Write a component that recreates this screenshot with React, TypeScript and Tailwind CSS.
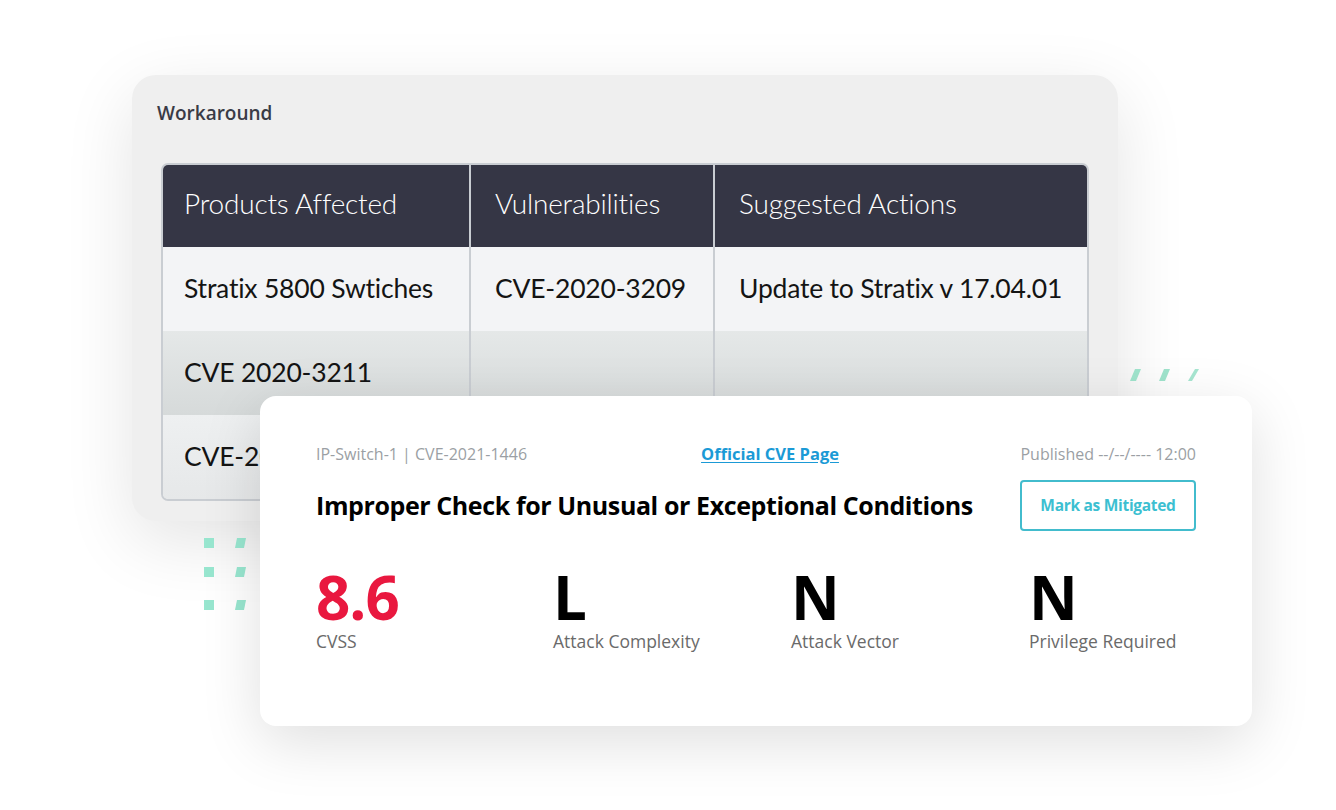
const lato = { fontFamily: "Lato, 'Noto Sans', sans-serif" };
const open = { fontFamily: "'Open Sans', 'Noto Sans', sans-serif" };

const rows = [
  ["Stratix 5800 Swtiches", "CVE-2020-3209", "Update to Stratix v 17.04.01"],
  ["CVE 2020-3211", "", ""],
  ["CVE-2020-3211", "", ""],
];

const stats = [
  { value: "8.6", label: "CVSS", red: true },
  { value: "L", label: "Attack Complexity" },
  { value: "N", label: "Attack Vector" },
  { value: "N", label: "Privilege Required" },
];

function Slashes() {
  return (
    <svg width="76" height="14" viewBox="0 0 76 14" className="absolute left-[1126px] top-[368px]">
      <polygon points="4,13 10,13 15,1 9,1" fill="#9fe3cc" />
      <polygon points="33,13 39,13 44,1 38,1" fill="#9fe3cc" />
      <polygon points="62,13 66,13 73,1 69,1" fill="#a7e6d1" />
    </svg>
  );
}

function Dots() {
  return (
    <svg width="46" height="76" viewBox="0 0 46 76" className="absolute left-[202px] top-[536px]">
      {[2, 31, 64].map((y) => (
        <g key={y}>
          <rect x="2" y={y} width="10" height="10" fill="#98e6cf" />
          <polygon points={`${33},${y + 10} ${42},${y + 10} ${44},${y} ${35},${y}`} fill="#98e6cf" />
        </g>
      ))}
    </svg>
  );
}

export default function App() {
  return (
    <div className="relative w-[1336px] h-[810px] bg-white overflow-hidden" style={lato}>
      {/* Workaround panel */}
      <div className="absolute left-[132px] top-[75px] w-[986px] h-[446px] rounded-[24px] bg-[#efefef] shadow-[0_20px_70px_rgba(0,0,0,0.11)] px-[29px] pt-[26px]">
        <div className="text-[19px] font-semibold text-[#3a3b46] ml-[-4px] leading-[24px]" style={open}>Workaround</div>
        <div className="mt-[38px] rounded-[7px] border-2 border-[#c9cdd2] overflow-hidden">
          <div className="grid grid-cols-[306px_244px_1fr] bg-[#353645] h-[82px] items-center text-white text-[28px] font-light tracking-[-0.2px]">
            <div className="pl-[21px] pb-[6px]">Products Affected</div>
            <div className="pl-[24px] pb-[6px] border-l-2 border-[#c9cdd2] h-full flex items-center">Vulnerabilities</div>
            <div className="pl-[24px] pb-[6px] border-l-2 border-[#c9cdd2] h-full flex items-center">Suggested Actions</div>
          </div>
          {rows.map((r, i) => (
            <div
              key={i}
              className={
                "grid grid-cols-[306px_244px_1fr] h-[84px] items-stretch text-[26.5px] text-[#141414] tracking-[-0.2px] " +
                (i === 0 ? "bg-[#f3f4f6]" : i === 1 ? "bg-gradient-to-b from-[#e5e8e8] to-[#d6dada]" : "bg-gradient-to-b from-[#eef0f1] to-[#e6e8e9]")
              }
            >
              <div className="pl-[21px] flex items-center">{r[0]}</div>
              <div className="pl-[24px] border-l-2 border-[#c9cdd2] flex items-center">{r[1]}</div>
              <div className="pl-[24px] border-l-2 border-[#c9cdd2] flex items-center">{r[2]}</div>
            </div>
          ))}
        </div>
      </div>

      <Slashes />
      <Dots />

      {/* CVE card */}
      <div
        className="absolute left-[260px] top-[396px] w-[992px] h-[330px] rounded-[16px] bg-white shadow-[0_16px_60px_rgba(0,0,0,0.13)] pl-[56px] pr-[56px] pt-[48px]"
        style={open}
      >
        <div className="grid grid-cols-[1fr_auto_1fr] items-center text-[16px] text-[#9b9fa4] leading-[20px]">
          <span>IP-Switch-1 | CVE-2021-1446</span>
          <a className="font-bold text-[#1b9ad6] text-[16.5px] underline underline-offset-2 ml-[28px]">Official CVE Page</a>
          <span className="text-right">Published --/--/---- 12:00</span>
        </div>
        <div className="flex items-center justify-between mt-[16px]">
          <h1 className="text-[25px] font-bold text-black tracking-[-0.4px]">Improper Check for Unusual or Exceptional Conditions</h1>
          <button className="w-[176px] h-[51px] rounded-[4px] border-2 border-[#42bccd] text-[#3cbfd1] text-[15.5px] font-bold tracking-[-0.3px]">
            Mark as Mitigated
          </button>
        </div>
        <div className="grid grid-cols-[237px_238px_238px_1fr] mt-[36px]">
          {stats.map((s) => (
            <div key={s.label}>
              <div className={"text-[60px] font-bold leading-[60px] tracking-[-1px] " + (s.red ? "text-[#e9183f]" : "text-black")}>{s.value}</div>
              <div className="text-[17.5px] text-[#6a6a6a] mt-[2px] leading-[24px]">{s.label}</div>
            </div>
          ))}
        </div>
      </div>
    </div>
  );
}
